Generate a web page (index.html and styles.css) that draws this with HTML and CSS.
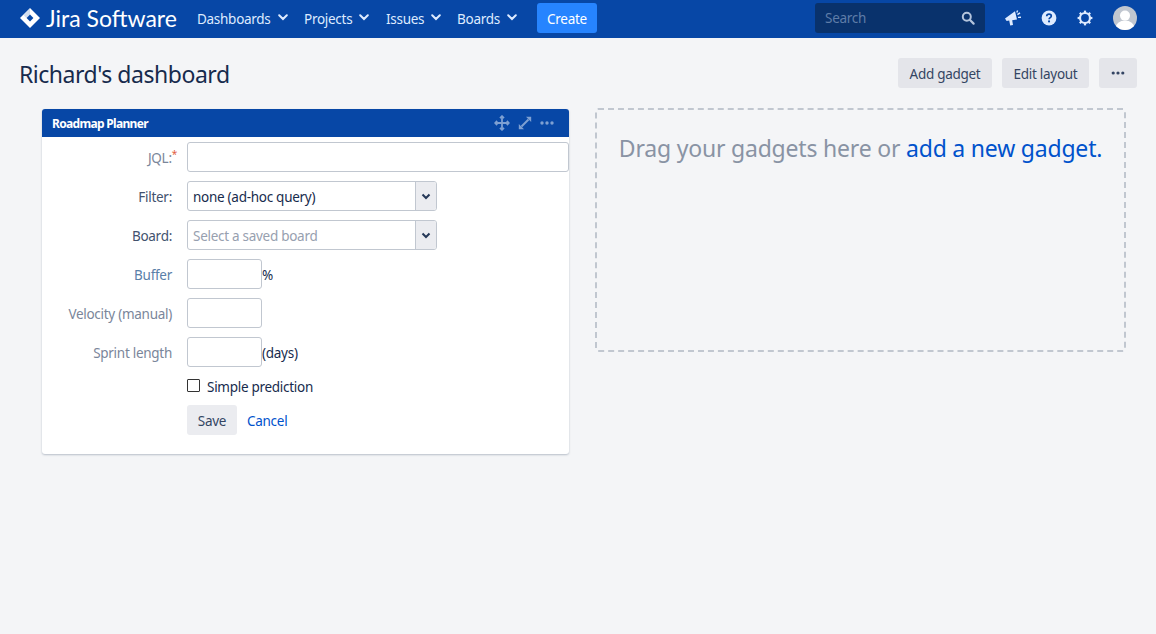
FILE: index.html
```html
<!DOCTYPE html>
<html lang="en">
<head>
<meta charset="utf-8">
<title>Richard's dashboard</title>
<link rel="stylesheet" href="styles.css">
</head>
<body>
<header class="topbar">
  <a class="logo">
    <svg class="logo-mark" viewBox="0 0 20 20" width="20" height="20"><path fill="#fff" d="M10 0 L20 10 L10 20 L0 10 Z"/><path fill="#0747a6" d="M10 6.6 L13.4 10 L10 13.4 L6.6 10 Z"/><path fill="#0747a6" d="M10 0.2 L10 6.4 L6.4 10 L3.6 7Z" opacity=".18"/></svg>
    <span class="logo-text">Jira Software</span>
  </a>
  <nav class="nav">
    <a class="nav-item nav-dash">Dashboards<svg class="chev" viewBox="0 0 10 7" width="10" height="7"><path d="M1.2 1.3 L5 5 L8.8 1.3" fill="none" stroke="#deebff" stroke-width="2" stroke-linecap="round"/></svg></a>
    <a class="nav-item nav-proj">Projects<svg class="chev" viewBox="0 0 10 7" width="10" height="7"><path d="M1.2 1.3 L5 5 L8.8 1.3" fill="none" stroke="#deebff" stroke-width="2" stroke-linecap="round"/></svg></a>
    <a class="nav-item nav-iss">Issues<svg class="chev" viewBox="0 0 10 7" width="10" height="7"><path d="M1.2 1.3 L5 5 L8.8 1.3" fill="none" stroke="#deebff" stroke-width="2" stroke-linecap="round"/></svg></a>
    <a class="nav-item nav-brd">Boards<svg class="chev" viewBox="0 0 10 7" width="10" height="7"><path d="M1.2 1.3 L5 5 L8.8 1.3" fill="none" stroke="#deebff" stroke-width="2" stroke-linecap="round"/></svg></a>
    <a class="create">Create</a>
  </nav>
  <div class="top-right">
    <div class="search">
      <span class="search-text">Search</span>
      <svg viewBox="0 0 14 14" width="14" height="14"><circle cx="5.8" cy="5.8" r="4" fill="none" stroke="#b3c4dc" stroke-width="2"/><path d="M9 9 L12.6 12.6" stroke="#b3c4dc" stroke-width="2.2" stroke-linecap="round"/></svg>
    </div>
    <svg class="ic-feedback" viewBox="0 0 16 16" width="16" height="16"><path fill="#deebff" d="M0 8.6 L10 1.2 L12 9.6 L7.2 10.2 L8 15 L5.2 15.6 L4.2 10.6 L1.6 11 Z"/><path d="M12.4 4.6 L15 2.8 M13 7.4 L16 7.2 M11.8 2.4 L12.6 .4" stroke="#deebff" stroke-width="1.4" fill="none"/></svg>
    <svg class="ic-help" viewBox="0 0 16 16" width="16" height="16"><circle cx="8" cy="8" r="7.4" fill="#deebff"/><path d="M5.7 6.2 C5.8 4.8 6.8 4.2 8 4.2 C9.4 4.2 10.3 5 10.3 6.1 C10.3 7.7 8.2 7.6 8.1 9.2" fill="none" stroke="#0747a6" stroke-width="1.7"/><circle cx="8.05" cy="11.4" r="1.05" fill="#0747a6"/></svg>
    <svg class="ic-gear" viewBox="0 0 16 16" width="16" height="16"><circle cx="8" cy="8" r="5" fill="none" stroke="#deebff" stroke-width="2.2"/><g stroke="#deebff" stroke-width="2.2"><path d="M8 .6V3"/><path d="M8 13V15.4"/><path d="M.6 8H3"/><path d="M13 8H15.4"/><path d="M2.8 2.8L4.4 4.4"/><path d="M11.6 11.6L13.2 13.2"/><path d="M2.8 13.2L4.4 11.6"/><path d="M11.6 4.4L13.2 2.8"/></g></svg>
    <svg class="avatar" viewBox="0 0 24 24" width="24" height="24"><defs><clipPath id="av"><circle cx="12" cy="12" r="12"/></clipPath></defs><g clip-path="url(#av)"><rect width="24" height="24" fill="#c1c7d0"/><circle cx="12" cy="9.6" r="5" fill="#fff"/><ellipse cx="12" cy="22" rx="9.5" ry="7.5" fill="#fff"/></g></svg>
  </div>
</header>
<main class="page">
  <div class="page-head">
    <h1 class="title">Richard's dashboard</h1>
    <div class="actions">
      <a class="btn">Add gadget</a>
      <a class="btn">Edit layout</a>
      <a class="btn btn-more"><svg viewBox="0 0 14 4" width="14" height="4"><g fill="#344563"><circle cx="2.2" cy="2" r="1.6"/><circle cx="7" cy="2" r="1.6"/><circle cx="11.8" cy="2" r="1.6"/></g></svg></a>
    </div>
  </div>
  <div class="columns">
    <section class="gadget">
      <div class="gadget-head">
        <span class="gadget-title">Roadmap Planner</span>
        <div class="gadget-tools">
          <svg viewBox="0 0 16 16" width="16" height="16"><g fill="none" stroke="#7ea0d2" stroke-width="1.8"><path d="M8 1.5V14.5M1.5 8H14.5"/><path d="M6 3.2L8 1.2L10 3.2M6 12.8L8 14.8L10 12.8M3.2 6L1.2 8L3.2 10M12.8 6L14.8 8L12.8 10"/></g></svg>
          <svg viewBox="0 0 14 14" width="14" height="14"><g fill="#7ea0d2"><path d="M8 .8H13.2V6Z"/><path d="M.8 8V13.2H6Z"/></g><path d="M3.5 10.5L10.5 3.5" stroke="#7ea0d2" stroke-width="2"/></svg>
          <svg viewBox="0 0 14 4" width="14" height="4"><g fill="#7ea0d2"><circle cx="2" cy="2" r="1.7"/><circle cx="7" cy="2" r="1.7"/><circle cx="12" cy="2" r="1.7"/></g></svg>
        </div>
      </div>
      <form class="form">
        <div class="row row-jql">
          <label class="lbl lbl-muted">JQL:<sup class="req">*</sup></label>
          <input class="input input-full" type="text">
        </div>
        <div class="row">
          <label class="lbl lbl-dark">Filter:</label>
          <div class="select"><span class="select-val">none (ad-hoc query)</span><span class="select-arrow"><svg viewBox="0 0 10 7" width="10" height="7"><path d="M1.5 1.5 L5 5 L8.5 1.5" fill="none" stroke="#253858" stroke-width="2"/></svg></span></div>
        </div>
        <div class="row">
          <label class="lbl lbl-dark">Board:</label>
          <div class="select"><span class="select-val placeholder">Select a saved board</span><span class="select-arrow"><svg viewBox="0 0 10 7" width="10" height="7"><path d="M1.5 1.5 L5 5 L8.5 1.5" fill="none" stroke="#253858" stroke-width="2"/></svg></span></div>
        </div>
        <div class="row">
          <label class="lbl lbl-blue">Buffer</label>
          <input class="input input-short" type="text"><span class="unit">%</span>
        </div>
        <div class="row">
          <label class="lbl lbl-muted">Velocity (manual)</label>
          <input class="input input-short" type="text">
        </div>
        <div class="row">
          <label class="lbl lbl-slate">Sprint length</label>
          <input class="input input-short" type="text"><span class="unit">(days)</span>
        </div>
        <div class="row row-check">
          <span class="check"></span><span class="check-label">Simple prediction</span>
        </div>
        <div class="row row-buttons">
          <a class="btn btn-save">Save</a>
          <a class="cancel">Cancel</a>
        </div>
      </form>
    </section>
    <section class="dropzone">
      <p class="drop-text">Drag your gadgets here or <a class="drop-link">add a new gadget.</a></p>
    </section>
  </div>
</main>
</body>
</html>
```
FILE: styles.css
```css
* { box-sizing: border-box; }
html, body { margin: 0; height: 100%; }
body {
  background: #f4f5f7;
  color: #172b4d;
  font-family: "Noto Sans", "Open Sans", sans-serif;
  font-size: 13.5px;
  letter-spacing: -.28px;
  overflow: hidden;
}
.topbar {
  height: 38px;
  background: #0747a6;
  display: flex;
  align-items: center;
  padding: 0 0 2px 20px;
  color: #deebff;
}
.logo { display: flex; align-items: center; color: #fff; width: 177px; }
.logo-mark { flex: none; }
.logo-text {
  font-family: Lato, sans-serif;
  font-size: 23px;
  margin-left: 6px;
  letter-spacing: 0;
  white-space: nowrap;
}
.nav { display: flex; align-items: center; }
.nav-item { display: flex; align-items: center; white-space: nowrap; padding-top: 2px; }
.chev { margin-left: 7px; margin-top: -4px; }
.nav-dash { width: 107px; }
.nav-proj { width: 82px; }
.nav-iss { width: 71px; }
.nav-brd { width: 80px; }
.create {
  background: #2684ff;
  color: #fff;
  height: 30px;
  width: 60px;
  padding-top: 2px;
  border-radius: 3px;
  display: flex;
  align-items: center;
  justify-content: center;
}
.top-right { margin-left: auto; display: flex; align-items: center; }
.search {
  width: 170px;
  height: 30px;
  background: #09326c;
  border-radius: 3px;
  display: flex;
  align-items: center;
  justify-content: space-between;
  padding: 0 10px;
  color: #5f7da8;
  margin-right: 20px;
}
.ic-help { margin-left: 20px; margin-right: 20px; }
.avatar { margin-left: 20px; margin-right: 19px; }
.page { padding: 0 19px; }
.page-head {
  display: flex;
  justify-content: space-between;
  align-items: center;
  height: 71px;
}
.title {
  margin: 0;
  font-size: 23px;
  font-weight: 400;
  color: #172b4d;
  letter-spacing: -.47px;
}
.actions { display: flex; gap: 10px; margin-top: -2px; }
.btn {
  height: 30px;
  padding: 2px 10px 0;
  background: #e4e5ea;
  color: #344563;
  border-radius: 3px;
  display: flex;
  align-items: center;
  justify-content: center;
  white-space: nowrap;
}
.actions .btn:nth-child(1) { width: 94px; }
.actions .btn:nth-child(2) { width: 87px; }
.btn-more { width: 38px; padding: 0; }
.columns { display: flex; align-items: flex-start; padding-left: 23px; }
.gadget {
  width: 527px;
  background: #fff;
  border-radius: 3px;
  box-shadow: 0 1px 2px rgba(9, 30, 66, .25);
}
.gadget-head {
  height: 28px;
  background: #0747a6;
  border-radius: 3px 3px 0 0;
  display: flex;
  align-items: center;
  justify-content: space-between;
  padding: 0 15px 0 10px;
  margin-bottom: 5px;
}
.gadget-title { color: #fff; font-size: 12px; font-weight: 700; letter-spacing: -.68px; }
.gadget-tools { display: flex; align-items: center; gap: 8px; }
.form { padding-bottom: 19px; }
.row { display: flex; align-items: center; min-height: 30px; margin-bottom: 9px; }
.lbl {
  flex: none;
  width: 130px;
  margin-right: 15px;
  padding-top: 2px;
  text-align: right;
}
.lbl-muted { color: #7a869a; }
.lbl-dark { color: #42526e; }
.lbl-blue { color: #5a80a8; }
.lbl-slate { color: #7a869a; }
.req { color: #e2603f; font-size: 10px; line-height: 0; margin-right: -5px; }
.input {
  height: 30px;
  border: 1px solid #c1c7d0;
  border-radius: 3px;
  background: #fff;
  padding: 0 5px;
  margin: 0;
}
.input-full { flex: 1; min-width: 0; }
.input-short { width: 75px; }
.unit { color: #172b4d; padding-top: 2px; }
.select {
  width: 250px;
  height: 30px;
  border: 1px solid #c1c7d0;
  border-radius: 3px;
  display: flex;
  overflow: hidden;
}
.select-val {
  flex: 1;
  padding-left: 5px;
  line-height: 30px;
  color: #172b4d;
}
.placeholder { color: #97a0af; }
.select-arrow {
  flex: none;
  width: 21px;
  background: #ebecf0;
  border-left: 1px solid #c1c7d0;
  display: flex;
  align-items: center;
  justify-content: center;
}
.row-check { min-height: 20px; padding-left: 145px; margin-bottom: 9px; }
.check {
  width: 13px;
  height: 13px;
  border: 1px solid #333;
  border-radius: 1px;
  background: #fff;
  margin-right: 7px;
  margin-top: -2px;
}
.check-label { color: #172b4d; padding-top: 2px; }
.row-buttons { padding-left: 145px; margin-bottom: 0; }
.btn-save { width: 50px; padding: 2px 0 0; background: #ebecf0; }
.cancel { color: #0052cc; margin-left: 10px; padding-top: 2px; }
.dropzone {
  width: 531px;
  height: 244px;
  margin-top: -1px;
  margin-left: 26px;
  border: 2px dashed #c1c7d0;
  border-radius: 3px;
}
.drop-text {
  margin: 0;
  padding-top: 22px;
  text-align: center;
  font-size: 23px;
  color: #8993a4;
  letter-spacing: -.2px;
  white-space: nowrap;
}
.drop-link { color: #0052cc; }
```
